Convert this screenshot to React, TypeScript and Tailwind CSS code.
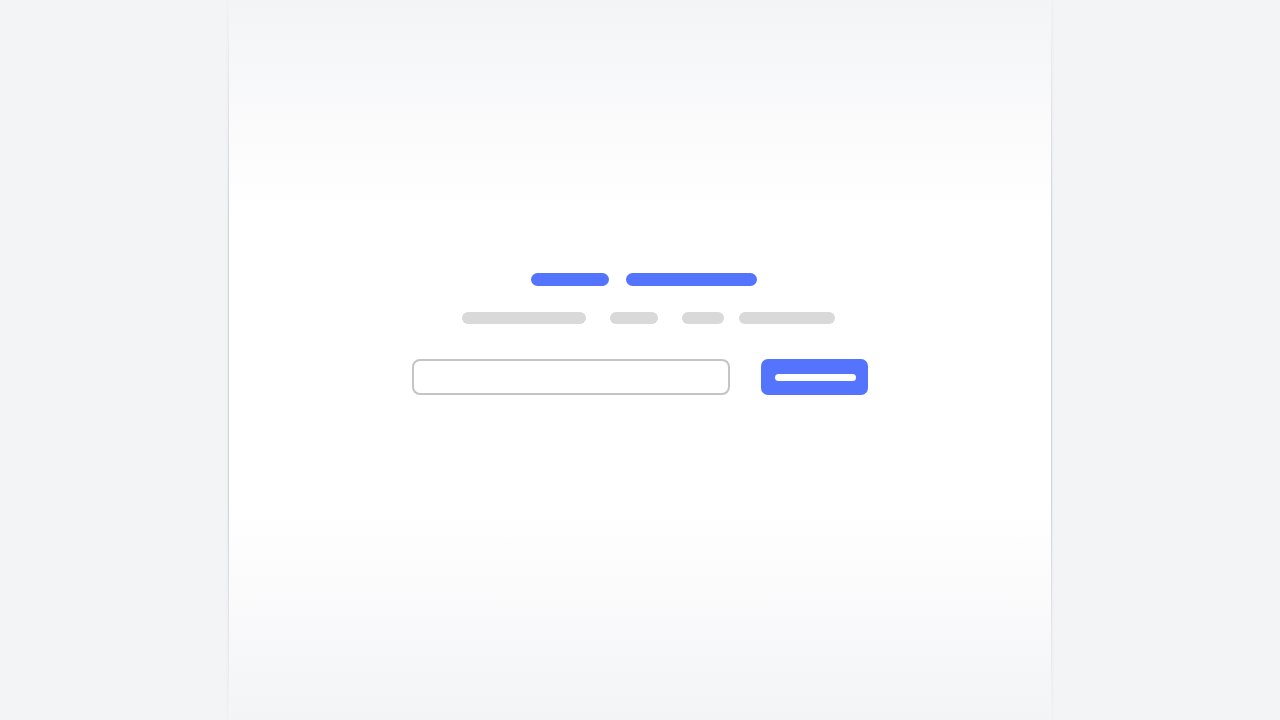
export default function App() {
  return (
    <div className="min-h-screen w-full bg-[#f3f4f6] flex justify-center font-['Liberation_Sans',sans-serif]">
      {/* edge line that fades out toward top and bottom */}
      <div className="h-[720px] px-[1px] bg-[linear-gradient(to_bottom,#f3f4f6_0%,#d2d2d4_30%,#d2d2d4_70%,#f3f4f6_100%)] shadow-[0_0_3px_rgba(0,0,0,0.05)]">
        <div className="w-[822px] h-[720px] bg-[linear-gradient(to_bottom,#f3f4f6_0%,#ffffff_30%,#ffffff_70%,#f3f4f6_100%)] flex flex-col items-center pt-[273px]">
          {/* heading placeholders */}
          <div className="flex gap-[17px] pl-[8px]">
            <div className="w-[78px] h-[13px] rounded-full bg-[#5474fe]" />
            <div className="w-[131px] h-[13px] rounded-full bg-[#5474fe]" />
          </div>

          {/* subtitle placeholders */}
          <div className="flex mt-[26px] pl-[17px]">
            <div className="w-[124px] h-[12px] rounded-full bg-[#d9d9d9]" />
            <div className="w-[48px] h-[12px] rounded-full bg-[#d9d9d9] ml-[24px]" />
            <div className="w-[42px] h-[12px] rounded-full bg-[#d9d9d9] ml-[24px]" />
            <div className="w-[96px] h-[12px] rounded-full bg-[#d9d9d9] ml-[15px]" />
          </div>

          {/* form */}
          <div className="flex gap-[31px] mt-[35px]">
            <div className="w-[318px] h-[36px] rounded-[8px] border-2 border-[#c4c4c4] bg-white" />
            <button className="w-[107px] h-[36px] rounded-[7px] bg-[#5474fe] flex items-center justify-center">
              <span className="block w-[81px] h-[7px] rounded-full bg-white ml-[2px]" />
            </button>
          </div>
        </div>
      </div>
    </div>
  );
}
